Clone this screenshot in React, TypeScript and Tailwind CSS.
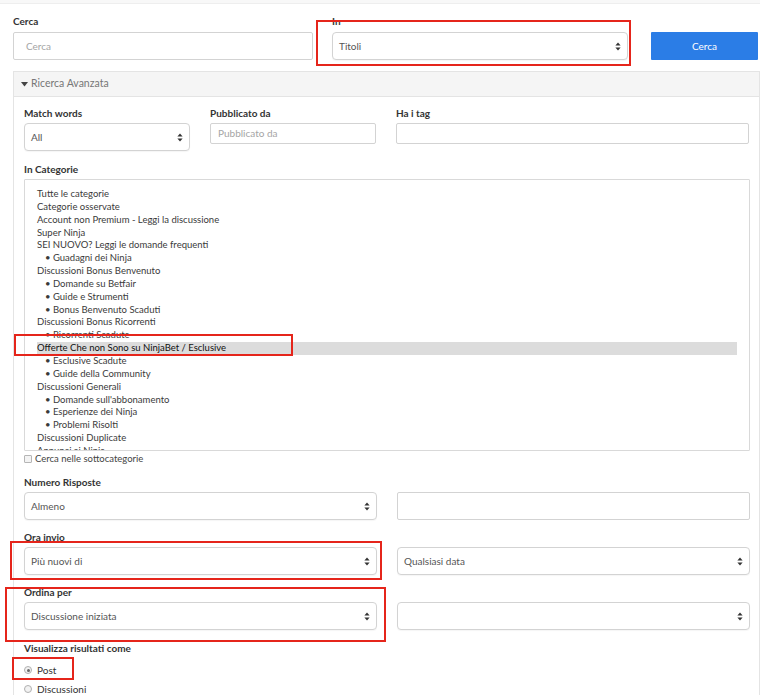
import React from "react";

const Arrows = () => (
  <svg width="6" height="9" viewBox="0 0 6 9" className="shrink-0">
    <path d="M3 0.5 L5.6 3.6 L0.4 3.6 Z" fill="#333" />
    <path d="M3 8.5 L5.6 5.4 L0.4 5.4 Z" fill="#333" />
  </svg>
);

const Label = ({ children, className = "" }: { children: React.ReactNode; className?: string }) => (
  <div className={"text-[10px] leading-[12px] font-bold text-[#333] mb-[4px] " + className}>{children}</div>
);

const Select = ({ value, className = "" }: { value?: string; className?: string }) => (
  <div
    className={
      "h-[28px] border border-[#d3d3d3] rounded-[4px] bg-white flex items-center justify-between pl-[6px] pr-[6px] shadow-[0_1px_1px_rgba(0,0,0,0.04)] " +
      className
    }
  >
    <span className="text-[10px] text-[#555]">{value}</span>
    <Arrows />
  </div>
);

const Input = ({ placeholder, className = "" }: { placeholder?: string; className?: string }) => (
  <div className={"border border-[#d3d3d3] rounded-[2px] bg-white flex items-center " + className}>
    <span className="text-[10px] text-[#a5a5a5]">{placeholder}</span>
  </div>
);

const cats: { t: string; sub?: boolean; sel?: boolean }[] = [
  { t: "Tutte le categorie" },
  { t: "Categorie osservate" },
  { t: "Account non Premium - Leggi la discussione" },
  { t: "Super Ninja" },
  { t: "SEI NUOVO? Leggi le domande frequenti" },
  { t: "Guadagni dei Ninja", sub: true },
  { t: "Discussioni Bonus Benvenuto" },
  { t: "Domande su Betfair", sub: true },
  { t: "Guide e Strumenti", sub: true },
  { t: "Bonus Benvenuto Scaduti", sub: true },
  { t: "Discussioni Bonus Ricorrenti" },
  { t: "Ricorrenti Scadute", sub: true },
  { t: "Offerte Che non Sono su NinjaBet / Esclusive", sel: true },
  { t: "Esclusive Scadute", sub: true },
  { t: "Guide della Community", sub: true },
  { t: "Discussioni Generali" },
  { t: "Domande sull'abbonamento", sub: true },
  { t: "Esperienze dei Ninja", sub: true },
  { t: "Problemi Risolti", sub: true },
  { t: "Discussioni Duplicate" },
  { t: "Annunci ai Ninja" },
];

export default function App() {
  return (
    <div className="w-[760px] h-[698px] overflow-hidden bg-white relative font-['Lato',sans-serif]">
      <div className="h-[4px] bg-[#f8f8f8] border-b border-[#eeeeee]" />

      {/* top search row */}
      <div className="flex items-end pl-[13px] mt-[11px]">
        <div className="w-[300px]">
          <Label className="mb-[5px]">Cerca</Label>
          <Input placeholder="Cerca" className="h-[28px] pl-[12px]" />
        </div>
        <div className="w-[296px] ml-[19px]">
          <Label className="mb-[5px]">In</Label>
          <Select value="Titoli" />
        </div>
        <button className="ml-[23px] w-[107px] h-[28px] bg-[#2b7de6] text-white text-[10px] rounded-[1px]">
          Cerca
        </button>
      </div>

      {/* advanced panel */}
      <div className="ml-[13px] w-[747px] mt-[11px] border border-[#e4e4e4] border-b-0">
        <div className="h-[25px] bg-[#f5f5f5] border-b border-[#e4e4e4] flex items-center pl-[7px] text-[10.5px] text-[#777]">
          <svg width="7" height="5" viewBox="0 0 7 5" className="mr-[3px]">
            <path d="M0 0 L7 0 L3.5 4.5 Z" fill="#444" />
          </svg>
          Ricerca Avanzata
        </div>

        <div className="pl-[10px] pr-[9px] pt-[10px]">
          {/* row 1 */}
          <div className="flex">
            <div className="w-[166px]">
              <Label>Match words</Label>
              <Select value="All" />
            </div>
            <div className="w-[166px] ml-[20px]">
              <Label>Pubblicato da</Label>
              <Input placeholder="Pubblicato da" className="h-[21px] pl-[7px] mt-[1px]" />
            </div>
            <div className="w-[353px] ml-[20px]">
              <Label>Ha i tag</Label>
              <Input className="h-[21px] mt-[1px]" />
            </div>
          </div>

          {/* categories */}
          <Label className="mt-[12px] mb-[3px]">In Categorie</Label>
          <div className="h-[272px] border border-[#d9d9d9] rounded-[1px] overflow-hidden pt-[8px] pl-[12px] pr-[12px]">
            {cats.map((c, i) => (
              <div
                key={i}
                className={
                  "h-[12.85px] leading-[12.85px] text-[9.5px] whitespace-nowrap " +
                  (c.sel ? "bg-[#dcdcdc] text-[#111]" : "text-[#3a3a3a]")
                }
              >
                {c.sub ? <span className="pl-[8px]">• {c.t}</span> : c.t}
              </div>
            ))}
          </div>

          {/* subcategory checkbox */}
          <div className="flex items-center h-[14px] mt-[1px] text-[9.5px] text-[#444]">
            <span className="w-[8px] h-[8px] border border-[#b5b5b5] rounded-[1px] bg-[#f3f3f3] mr-[3px]" />
            Cerca nelle sottocategorie
          </div>

          {/* Numero risposte */}
          <Label className="mt-[10px]">Numero Risposte</Label>
          <div className="flex gap-[20px]">
            <Select value="Almeno" className="w-[353px]" />
            <Input className="w-[353px] h-[28px]" />
          </div>

          <Label className="mt-[11px]">Ora invio</Label>
          <div className="flex gap-[20px]">
            <Select value="Più nuovi di" className="w-[353px]" />
            <Select value="Qualsiasi data" className="w-[353px]" />
          </div>

          <Label className="mt-[11px] mb-[3px]">Ordina per</Label>
          <div className="flex gap-[20px]">
            <Select value="Discussione iniziata" className="w-[353px]" />
            <Select value="" className="w-[353px]" />
          </div>

          <Label className="mt-[12px]">Visualizza risultati come</Label>
          <div className="mt-[10px] flex flex-col gap-[7px] text-[10px] text-[#333]">
            <div className="flex items-center h-[12px]">
              <span className="w-[8px] h-[8px] rounded-full border border-[#b0b0b0] bg-[#f2f2f2] mr-[5px] flex items-center justify-center">
                <span className="w-[3px] h-[3px] rounded-full bg-[#666]" />
              </span>
              Post
            </div>
            <div className="flex items-center h-[12px]">
              <span className="w-[8px] h-[8px] rounded-full border border-[#b0b0b0] bg-[#f2f2f2] mr-[5px]" />
              Discussioni
            </div>
          </div>
        </div>
      </div>

      {/* red annotation boxes */}
      <div className="absolute left-[316px] top-[20px] w-[315px] h-[46px] border-2 border-[#e5251b]" />
      <div className="absolute left-[14px] top-[334px] w-[279px] h-[22px] border-2 border-[#e5251b]" />
      <div className="absolute left-[10px] top-[541px] w-[372px] h-[39px] border-2 border-[#e5251b]" />
      <div className="absolute left-[5px] top-[587px] w-[381px] h-[55px] border-2 border-[#e5251b]" />
      <div className="absolute left-[12px] top-[657px] w-[62px] h-[23px] border-2 border-[#e5251b]" />
    </div>
  );
}
